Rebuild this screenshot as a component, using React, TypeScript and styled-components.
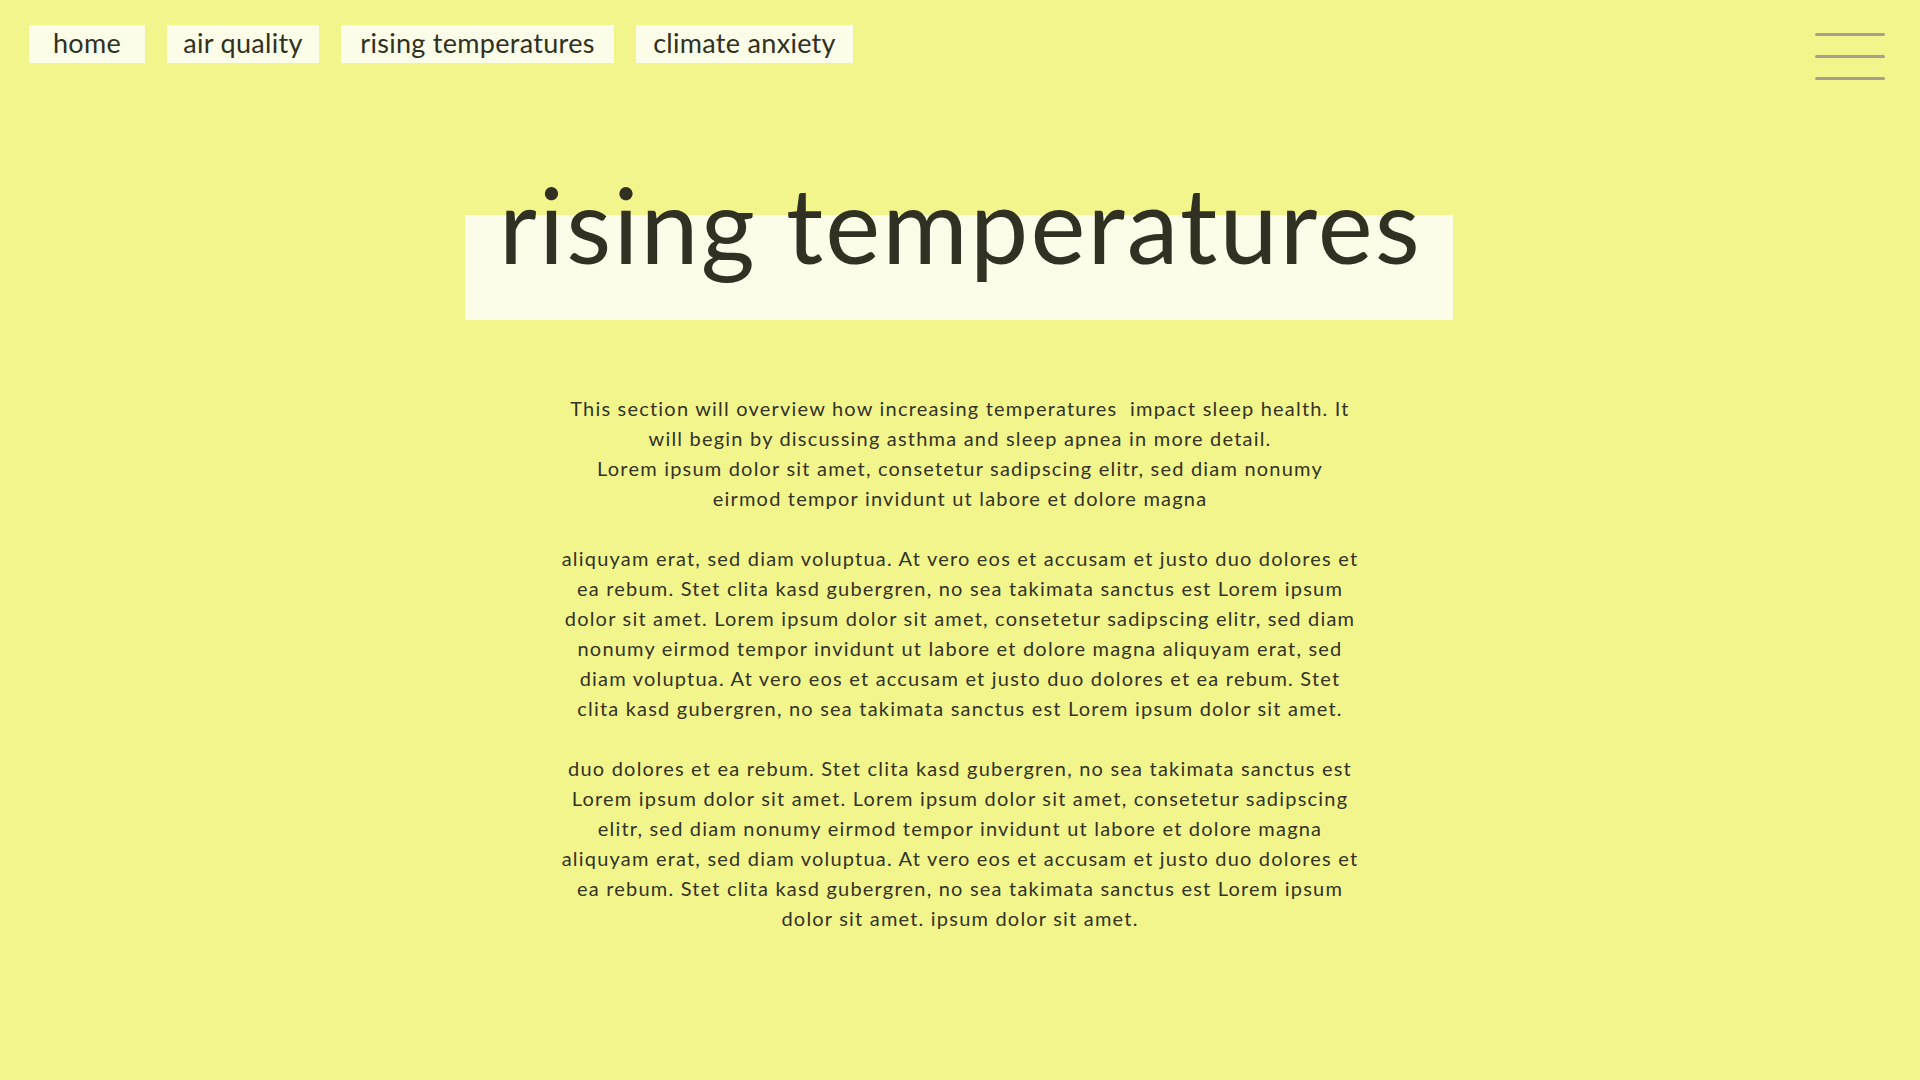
import React from "react";
import styled, { createGlobalStyle } from "styled-components";

const Global = createGlobalStyle`
  html, body {
    margin: 0;
    padding: 0;
    background: #f2f58c;
  }
  body {
    font-family: Lato, "Noto Sans", sans-serif;
    color: #303023;
  }
`;

const Page = styled.div`
  min-height: 1080px;
  background: #f2f58c;
  display: flex;
  flex-direction: column;
  align-items: stretch;
`;

const Header = styled.header`
  display: flex;
  justify-content: space-between;
  align-items: flex-start;
  padding: 25px 35px 0 29px;
`;

const Nav = styled.nav`
  display: flex;
  gap: 22px;
`;

const NavLink = styled.a<{ $w: number }>`
  display: block;
  box-sizing: border-box;
  width: ${(p) => p.$w}px;
  height: 38px;
  line-height: 36px;
  padding: 0;
  text-align: center;
  background: #fbfde8;
  color: #303023;
  font-size: 27px;
  letter-spacing: 0.3px;
  text-decoration: none;
  white-space: nowrap;
`;

const MenuButton = styled.button`
  margin-top: 7px;
  width: 70px;
  height: 50px;
  padding: 0;
  border: 0;
  background: transparent;
  cursor: pointer;
  display: block;
`;

const TitleWrap = styled.div`
  display: flex;
  justify-content: center;
  margin-top: 90px;
`;

const Title = styled.h1`
  margin: 0 0 0 -3px;
  width: 988px;
  padding-bottom: 44px;
  line-height: 104px;
  font-size: 104px;
  font-weight: 400;
  text-align: center;
  color: #303023;
  letter-spacing: 2.2px;
  text-indent: 4px;
  background: linear-gradient(to bottom, transparent 43px, #fbfde8 43px);
`;

const Body = styled.section`
  width: 900px;
  margin: 73px auto 0;
  text-align: center;
  font-size: 20px;
  line-height: 30px;
  letter-spacing: 1.2px;
  color: #333326;
`;

const Para = styled.p`
  margin: 0 0 30px;
  white-space: nowrap;
`;

const links: { label: string; w: number }[] = [
  { label: "home", w: 116 },
  { label: "air quality", w: 152 },
  { label: "rising temperatures", w: 273 },
  { label: "climate anxiety", w: 217 },
];

const paragraphs: string[][] = [
  [
    "This section will overview how increasing temperatures \u00a0impact sleep health. It",
    "will begin by discussing asthma and sleep apnea in more detail.",
    "Lorem ipsum dolor sit amet, consetetur sadipscing elitr, sed diam nonumy",
    "eirmod tempor invidunt ut labore et dolore magna",
  ],
  [
    "aliquyam erat, sed diam voluptua. At vero eos et accusam et justo duo dolores et",
    "ea rebum. Stet clita kasd gubergren, no sea takimata sanctus est Lorem ipsum",
    "dolor sit amet. Lorem ipsum dolor sit amet, consetetur sadipscing elitr, sed diam",
    "nonumy eirmod tempor invidunt ut labore et dolore magna aliquyam erat, sed",
    "diam voluptua. At vero eos et accusam et justo duo dolores et ea rebum. Stet",
    "clita kasd gubergren, no sea takimata sanctus est Lorem ipsum dolor sit amet.",
  ],
  [
    "duo dolores et ea rebum. Stet clita kasd gubergren, no sea takimata sanctus est",
    "Lorem ipsum dolor sit amet. Lorem ipsum dolor sit amet, consetetur sadipscing",
    "elitr, sed diam nonumy eirmod tempor invidunt ut labore et dolore magna",
    "aliquyam erat, sed diam voluptua. At vero eos et accusam et justo duo dolores et",
    "ea rebum. Stet clita kasd gubergren, no sea takimata sanctus est Lorem ipsum",
    "dolor sit amet. ipsum dolor sit amet.",
  ],
];

export default function App() {
  return (
    <Page>
      <Global />
      <Header>
        <Nav>
          {links.map((l) => (
            <NavLink key={l.label} href="#" $w={l.w}>
              {l.label}
            </NavLink>
          ))}
        </Nav>
        <MenuButton aria-label="menu">
          <svg width="70" height="50" viewBox="0 0 70 50">
            <g stroke="#a99e8e" strokeWidth="3" strokeLinecap="round">
              <line x1="1.5" y1="2.5" x2="68.5" y2="2.5" />
              <line x1="1.5" y1="24.5" x2="68.5" y2="24.5" />
              <line x1="1.5" y1="46.5" x2="68.5" y2="46.5" />
            </g>
          </svg>
        </MenuButton>
      </Header>
      <TitleWrap>
        <Title>rising temperatures</Title>
      </TitleWrap>
      <Body>
        {paragraphs.map((lines, i) => (
          <Para key={i}>
            {lines.map((l, j) => (
              <React.Fragment key={j}>
                {l}
                {j < lines.length - 1 && <br />}
              </React.Fragment>
            ))}
          </Para>
        ))}
      </Body>
    </Page>
  );
}
